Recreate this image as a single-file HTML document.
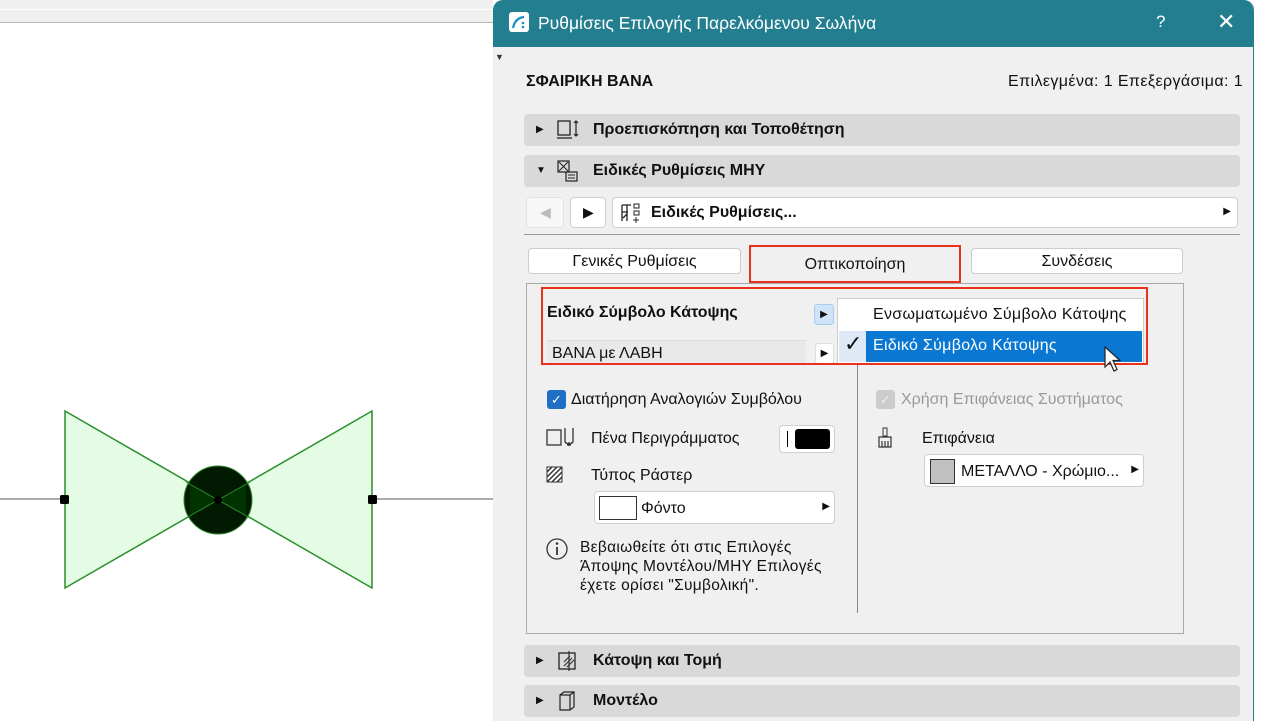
<!DOCTYPE html><html><head><meta charset="utf-8"><style>
*{box-sizing:border-box;margin:0;padding:0}
body{width:1263px;height:721px;overflow:hidden;background:#fff;position:relative;font-family:"Liberation Sans","DejaVu Sans",sans-serif;font-size:16px;color:#111}
.a{position:absolute}
.hdr{position:absolute;left:524px;width:716px;height:32px;background:#d9d9d9;border-radius:4px;font-weight:bold;font-size:16px;line-height:32px}
.hdr .tri{position:absolute;left:12px;top:0}
.hdr .t{position:absolute;left:69px}
.btn{position:absolute;background:#fff;border:1px solid #cfcfcf;border-radius:4px}
.tab{position:absolute;top:248px;height:26px;background:#fff;border:1px solid #ccc;border-radius:4px;text-align:center;line-height:26px;font-size:16px}
</style></head><body>
<div class="a" style="left:0;top:0;width:493px;height:9px;background:#f0f0f0"></div>
<div class="a" style="left:0;top:10px;width:493px;height:13px;background:#f0f0f0;border-bottom:1px solid #b8b8b8"></div>
<svg class="a" style="left:0;top:400px" width="493" height="200">
<line x1="0" y1="99" x2="493" y2="99" stroke="#555" stroke-width="1"/>
<polygon points="65,11 372,188 372,11 65,188" fill="#e4fbe4" stroke="#2a8f2a" stroke-width="1.5"/>
<circle cx="218" cy="100" r="34" fill="#021a02" stroke="#2a8f2a" stroke-width="1"/>
<path d="M190,84 L218,100 L190,116Z M246,84 L218,100 L246,116Z" fill="#003300"/>
<line x1="186" y1="82" x2="250" y2="118" stroke="#2a8f2a"/><line x1="186" y1="118" x2="250" y2="82" stroke="#2a8f2a"/>
<circle cx="218" cy="100" r="4" fill="#000"/>
<rect x="60" y="95" width="9" height="9" rx="1.5" fill="#000"/><rect x="368" y="95" width="9" height="9" rx="1.5" fill="#000"/>
</svg>
<div class="a" style="left:493px;top:0;width:761px;height:721px;background:#f0f0f0;border-right:1px solid #2a7f8e;border-radius:10px 10px 0 0;overflow:hidden">
<div class="a" style="left:0;top:0;width:761px;height:47px;background:#237f8f"></div>
</div>
<div class="a" style="left:509px;top:12px;width:20px;height:20px;background:#fff;border-radius:3px"></div>
<svg class="a" style="left:509px;top:12px" width="20" height="20"><path d="M4,16 Q6,6 15,5" stroke="#1a8fc8" stroke-width="2.2" fill="none"/><circle cx="14" cy="11" r="1.3" fill="#1a8fc8"/><circle cx="14" cy="15" r="1.3" fill="#1a8fc8"/></svg>
<div class="a" style="left:538px;top:13px;color:#fff;font-size:17.5px">Ρυθμίσεις Επιλογής Παρελκόμενου Σωλήνα</div>
<div class="a" style="left:1156px;top:12px;color:#fff;font-size:17px">?</div>
<div class="a" style="left:1217px;top:9px;color:#fff;font-size:22px;font-weight:300">✕</div>
<div class="a" style="left:495px;top:52px;font-size:9px;color:#333">▼</div>
<div class="a" style="left:526px;top:73px;font-weight:bold;font-size:16px">ΣΦΑΙΡΙΚΗ ΒΑΝΑ</div>
<div class="a" style="left:1008px;top:73px;font-size:16px;letter-spacing:0.4px">Επιλεγμένα: 1 Επεξεργάσιμα: 1</div>

<div class="hdr" style="top:114px"><span class="tri" style="font-size:10px">▶</span>
<svg class="a" style="left:32px;top:5px" width="24" height="22"><rect x="2" y="2" width="12" height="14" fill="none" stroke="#222" stroke-width="1.3"/><path d="M1,19 h15" stroke="#222" stroke-width="1.3"/><path d="M20,2 v15 M18,4 l2,-2 2,2 M18,15 l2,2 2,-2" stroke="#222" stroke-width="1.2" fill="none"/></svg>
<span class="t">Προεπισκόπηση και Τοποθέτηση</span></div>
<div class="hdr" style="top:155px"><span class="tri" style="font-size:10px">▼</span>
<svg class="a" style="left:32px;top:4px" width="24" height="24"><rect x="2" y="2" width="11" height="11" fill="none" stroke="#222" stroke-width="1.2"/><path d="M3,3 l9,9 M12,3 l-9,9" stroke="#222"/><rect x="10" y="13" width="11" height="9" fill="none" stroke="#222" stroke-width="1.2"/><path d="M12,16h7M12,19h7" stroke="#222"/></svg>
<span class="t">Ειδικές Ρυθμίσεις ΜΗΥ</span></div>

<div class="btn" style="left:526px;top:197px;width:38px;height:31px;background:#f7f7f7;border-color:#e2e2e2"><span class="a" style="left:13px;top:6px;color:#bbb;font-size:14px">◀</span></div>
<div class="btn" style="left:570px;top:197px;width:36px;height:31px"><span class="a" style="left:12px;top:6px;font-size:14px">▶</span></div>
<div class="btn" style="left:612px;top:197px;width:626px;height:31px">
<svg class="a" style="left:6px;top:4px" width="24" height="22"><path d="M3,3h9M3,3v16M8,3v16M3,10h6M4,16l4,-4" stroke="#222" stroke-width="1.3" fill="none"/><rect x="15" y="2" width="5" height="4" fill="none" stroke="#222"/><rect x="15" y="9" width="5" height="4" fill="none" stroke="#222"/><path d="M14,18h6M17,15v6" stroke="#222"/></svg>
<span class="a" style="left:38px;top:6px;font-weight:bold">Ειδικές Ρυθμίσεις...</span><span class="a" style="right:6px;top:8px;font-size:10px">▶</span></div>
<div class="a" style="left:524px;top:234px;width:716px;height:1px;background:#999"></div>

<div class="a" style="left:526px;top:283px;width:658px;height:351px;border:1px solid #aaa"></div>
<div class="tab" style="left:528px;width:213px;line-height:26px">Γενικές Ρυθμίσεις</div>
<div class="tab" style="left:749px;top:245px;width:212px;height:38px;background:#f0f0f0;border:2px solid #e8321e;border-radius:0;line-height:36px">Οπτικοποίηση</div>
<div class="tab" style="left:971px;width:212px;line-height:26px">Συνδέσεις</div>

<div class="a" style="left:547px;top:304px;font-weight:bold">Ειδικό Σύμβολο Κάτοψης</div>
<div class="a" style="left:814px;top:304px;width:20px;height:21px;background:#cfe4f8;border:1px solid #a8cbee;border-radius:3px;font-size:10px;text-align:center;line-height:19px">▶</div>
<div class="a" style="left:547px;top:340px;width:259px;height:25px;background:#e9e9e9;border-top:1px solid #ddd"><span class="a" style="left:5px;top:4px">ΒΑΝΑ με ΛΑΒΗ</span></div>
<div class="a" style="left:815px;top:343px;width:19px;height:21px;background:#fff;border:1px solid #ddd;border-radius:3px;font-size:10px;text-align:center;line-height:19px">▶</div>
<div class="a" style="left:837px;top:298px;width:307px;height:66px;background:#fff;border:1px solid #ccc"></div>
<div class="a" style="left:873px;top:306px;letter-spacing:0.3px">Ενσωματωμένο Σύμβολο Κάτοψης</div>
<div class="a" style="left:839px;top:331px;width:303px;height:31px;background:#0a78d2"></div>
<div class="a" style="left:839px;top:331px;width:27px;height:31px;background:#dfe9f5"></div>
<div class="a" style="left:844px;top:331px;font-size:22px;color:#111">✓</div>
<div class="a" style="left:873px;top:337px;color:#fff;letter-spacing:0.3px">Ειδικό Σύμβολο Κάτοψης</div>
<div class="a" style="left:541px;top:287px;width:607px;height:78px;border:2px solid #e8321e"></div>
<svg class="a" style="left:1102px;top:345px" width="20" height="30"><path d="M3,2 v20 l5,-5 l4,9 l3,-1.5 l-4,-9 l7,0z" fill="#fff" stroke="#222" stroke-width="1.2"/></svg>
<div class="a" style="left:857px;top:365px;width:1px;height:248px;background:#888"></div>

<div class="a" style="left:547px;top:390px;width:19px;height:19px;background:#1f6fc5;border-radius:3px;color:#fff;font-size:13px;text-align:center;line-height:19px">✓</div>
<div class="a" style="left:571px;top:391px">Διατήρηση Αναλογιών Συμβόλου</div>
<svg class="a" style="left:546px;top:427px" width="40" height="24"><rect x="1" y="3" width="14" height="15" fill="none" stroke="#333" stroke-width="1.3"/><path d="M19,1 v14 q4,4 8,0 v-14 M21,18 h4 M23,15 v4" stroke="#333" stroke-width="1.3" fill="none"/></svg>
<div class="a" style="left:591px;top:430px">Πένα Περιγράμματος</div>
<div class="btn" style="left:779px;top:425px;width:56px;height:28px"><span class="a" style="left:7px;top:5px;width:1px;height:16px;background:#000"></span><span class="a" style="left:15px;top:3px;width:35px;height:20px;background:#000;border-radius:3px"></span></div>
<svg class="a" style="left:546px;top:466px" width="18" height="18"><rect x="1" y="1" width="15" height="15" fill="#fff" stroke="#333"/><path d="M1,6l5,-5M1,11l10,-10M1,16l15,-15M6,16l10,-10M11,16l5,-5" stroke="#333" stroke-width="1.5"/></svg>
<div class="a" style="left:591px;top:467px">Τύπος Ράστερ</div>
<div class="btn" style="left:594px;top:491px;width:241px;height:33px"><span class="a" style="left:4px;top:4px;width:38px;height:24px;border:1px solid #333;background:#fff"></span><span class="a" style="left:46px;top:8px">Φόντο</span><span class="a" style="right:4px;top:9px;font-size:10px">▶</span></div>
<svg class="a" style="left:545px;top:537px" width="24" height="24"><circle cx="12" cy="12" r="10" fill="none" stroke="#333" stroke-width="1.3"/><path d="M12,10v8" stroke="#333" stroke-width="1.8"/><circle cx="12" cy="6.5" r="1.3" fill="#333"/></svg>
<div class="a" style="left:580px;top:538px;font-size:15.5px;line-height:19px;letter-spacing:0.3px">Βεβαιωθείτε ότι στις Επιλογές<br>Άποψης Μοντέλου/ΜΗΥ Επιλογές<br>έχετε ορίσει "Συμβολική".</div>

<div class="a" style="left:876px;top:390px;width:19px;height:19px;background:#ccc;border-radius:3px;color:#eee;font-size:13px;text-align:center;line-height:19px">✓</div>
<div class="a" style="left:901px;top:391px;color:#999">Χρήση Επιφάνειας Συστήματος</div>
<svg class="a" style="left:877px;top:427px" width="18" height="24"><rect x="6" y="1" width="4" height="8" fill="none" stroke="#333"/><path d="M2,10 h12 v10 h-12z M5,14v6M8,14v6M11,14v6" stroke="#333" fill="none" stroke-width="1.2"/></svg>
<div class="a" style="left:922px;top:430px">Επιφάνεια</div>
<div class="btn" style="left:924px;top:454px;width:220px;height:33px"><span class="a" style="left:5px;top:4px;width:25px;height:25px;border:1px solid #333;background:#c0c0c0"></span><span class="a" style="left:36px;top:8px">ΜΕΤΑΛΛΟ - Χρώμιο...</span><span class="a" style="right:4px;top:9px;font-size:10px">▶</span></div>

<div class="hdr" style="top:645px"><span class="tri" style="font-size:10px">▶</span>
<svg class="a" style="left:32px;top:5px" width="24" height="22"><rect x="3" y="3" width="16" height="16" fill="none" stroke="#222" stroke-width="1.3"/><path d="M8,16l8,-8M8,12l6,-6M11,17l7,-7M13,1v20" stroke="#333" stroke-width="1.2"/></svg>
<span class="t">Κάτοψη και Τομή</span></div>
<div class="hdr" style="top:685px"><span class="tri" style="font-size:10px">▶</span>
<svg class="a" style="left:32px;top:4px" width="24" height="24"><path d="M4,6 l4,-3 h10 v15 l-4,3 h-10z M4,6 h10 v15 M14,6 l4,-3" fill="none" stroke="#222" stroke-width="1.2"/></svg>
<span class="t">Μοντέλο</span></div>
</body></html>
